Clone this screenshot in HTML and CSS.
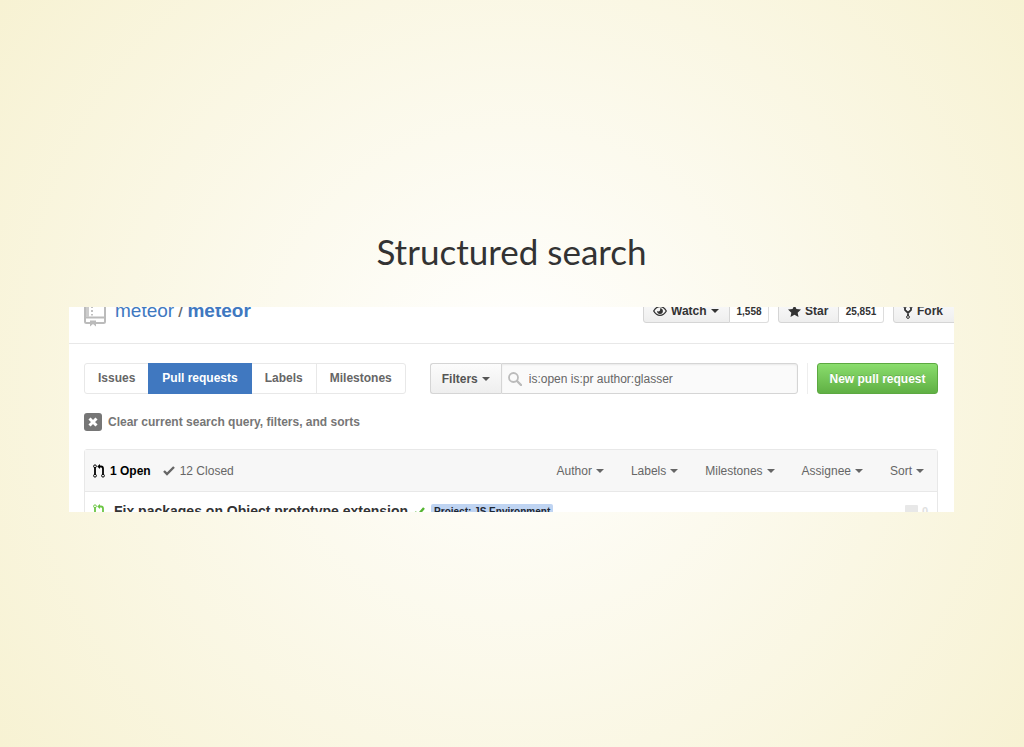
FILE: index.html
```html
<!DOCTYPE html>
<html lang="en">
<head>
    <meta charset="UTF-8">
    <meta name="viewport" content="width=device-width, initial-scale=1.0">
    <title>Structured search</title>
    <link rel="stylesheet" href="styles.css">
</head>
<body>
    <section class="slide">
        <h2>Structured search</h2>
        <div class="shot">
            <header class="repo-head">
                <svg class="repo-icon" width="22" height="30" viewBox="0 0 22 30" fill="none" stroke="#bbb" stroke-width="2">
                    <path d="M6 26H2.500Q1 26 1 24.500V2.500Q1 1 2.500 1H19.500Q21 1 21 2.500V24.500Q21 26 19.500 26H12M1 20.500H21"/>
                    <path d="M3.500 1V20" stroke="#ccc" stroke-width="3"/>
                    <path d="M8 5v2M8 9v2M8 13v2M8 17v1.500" stroke-width="1.800"/>
                    <path d="M6 23.500h6v6l-3-2.500-3 2.500z" fill="#bbb" stroke="none"/>
                </svg>
                <h1 class="repo-name"><a href="#">meteor</a><span>/</span><a href="#" class="strong">meteor</a></h1>
                <div class="social">
                    <div class="social-item">
                        <button class="btn-small btn-watch">
                            <svg width="14" height="12" viewBox="0 0 14 12">
                                <path d="M.7 6Q3.200 1.600 7 1.600T13.300 6Q10.800 10.400 7 10.400T.7 6z" fill="none" stroke="#333" stroke-width="1.300"/>
                                <path d="M7 3.200a2.900 2.900 0 1 1-2.900 2.900q1.500.8 2.500 0T7 3.200z" fill="#333"/>
                            </svg>
                            Watch<span class="caret"></span>
                        </button>
                        <a href="#" class="count count-watch">1,558</a>
                    </div>
                    <div class="social-item">
                        <button class="btn-small btn-star">
                            <svg width="13" height="14" viewBox="0 0 14 15"><path d="M14 6l-4.900-.64L7 1 4.900 5.360 0 6l3.600 3.260L2.670 14 7 11.670 11.330 14l-.93-4.740z" fill="#333"/></svg>
                            Star
                        </button>
                        <a href="#" class="count count-star">25,851</a>
                    </div>
                    <div class="social-item">
                        <button class="btn-small btn-fork">
                            <svg width="10" height="15" viewBox="0 0 10 15" fill="none" stroke="#333">
                                <path d="M2 4v2l3 3 3-3V4M5 8.500V12" stroke-width="1.800"/>
                                <circle cx="2" cy="2.500" r="1.400"/><circle cx="8" cy="2.500" r="1.400"/><circle cx="5" cy="13" r="1.400"/>
                            </svg>
                            Fork
                        </button>
                    </div>
                </div>
            </header>

            <div class="content">
                <div class="toolbar">
                    <nav class="subnav">
                        <a href="#">Issues</a>
                        <a href="#" class="selected">Pull requests</a>
                        <a href="#">Labels</a>
                        <a href="#">Milestones</a>
                    </nav>
                    <div class="search">
                        <button class="btn-filters">Filters<span class="caret"></span></button>
                        <label class="search-box">
                            <svg width="14" height="14" viewBox="0 0 14 14" fill="none" stroke="#bbb">
                                <circle cx="5.500" cy="5.500" r="4.500" stroke-width="1.800"/>
                                <path d="M9 9l4 4" stroke-width="2.400" stroke-linecap="round"/>
                            </svg>
                            <input type="text" value="is:open is:pr author:glasser" aria-label="Search pull requests">
                        </label>
                    </div>
                    <div class="new-pr">
                        <button class="btn-primary">New pull request</button>
                    </div>
                </div>

                <a href="#" class="clear">
                    <svg width="18" height="18" viewBox="0 0 18 18">
                        <rect width="18" height="18" rx="3" fill="#767676"/>
                        <path d="M5.500 5.500l7 7M12.500 5.500l-7 7" stroke="#fff" stroke-width="3"/>
                    </svg>
                    Clear current search query, filters, and sorts
                </a>

                <div class="listing">
                    <div class="listing-head">
                        <a href="#" class="state open">
                            <svg class="pr-icon" width="12" height="14" viewBox="0 0 12 14" fill="none" stroke="currentColor">
                                <path d="M2 4v6M10 10V4.500Q10 2.500 8 2.500H6.500" stroke-width="1.800"/>
                                <path d="M7 0v5L4.200 2.500z" fill="currentColor" stroke="none"/>
                                <circle cx="2" cy="2.300" r="1.400"/><circle cx="2" cy="11.700" r="1.400"/><circle cx="10" cy="11.700" r="1.400"/>
                            </svg>
                            1 Open
                        </a>
                        <a href="#" class="state closed">
                            <svg width="12" height="10" viewBox="0 0 12 10"><path d="M1 5l3 3 7-7" fill="none" stroke="#666" stroke-width="2.400"/></svg>
                            12 Closed
                        </a>
                        <div class="menus">
                            <button>Author<span class="caret"></span></button>
                            <button>Labels<span class="caret"></span></button>
                            <button>Milestones<span class="caret"></span></button>
                            <button>Assignee<span class="caret"></span></button>
                            <button>Sort<span class="caret"></span></button>
                        </div>
                    </div>
                    <div class="pull">
                        <svg class="pr-icon" width="12" height="14" viewBox="0 0 12 14" fill="none" stroke="currentColor">
                            <path d="M2 4v6M10 10V4.500Q10 2.500 8 2.500H6.500" stroke-width="1.800"/>
                            <path d="M7 0v5L4.200 2.500z" fill="currentColor" stroke="none"/>
                            <circle cx="2" cy="2.300" r="1.400"/><circle cx="2" cy="11.700" r="1.400"/><circle cx="10" cy="11.700" r="1.400"/>
                        </svg>
                        <a href="#" class="pull-title">Fix packages on Object prototype extension</a>
                        <svg class="status" width="12" height="12" viewBox="0 0 12 12"><path d="M1 7l3 3 6-7" fill="none" stroke="#55b532" stroke-width="2.400"/></svg>
                        <a href="#" class="label">Project: JS Environment</a>
                        <a href="#" class="comments">
                            <svg width="13" height="13" viewBox="0 0 13 13"><path d="M1 0h11q1 0 1 1v7q0 1-1 1H7l-4 4V9H1q-1 0-1-1V1q0-1 1-1z" fill="#e8e8e8"/></svg>
                            0
                        </a>
                    </div>
                </div>
            </div>
        </div>
    </section>
</body>
</html>
```
FILE: styles.css
```css
* {
    box-sizing: border-box;
}
body {
    margin: 0;
    min-height: 100vh;
    font-family: "Liberation Sans", Arial, sans-serif;
    font-size: 12px;
    color: #333;
    background: #f7f2d3 radial-gradient(circle at center, #ffffff 0%, #f7f2d3 100%);
}
a {
    color: inherit;
    text-decoration: none;
}
button {
    font: inherit;
    color: inherit;
    cursor: pointer;
}
svg {
    flex: none;
}
.slide {
    display: flex;
    flex-direction: column;
    justify-content: center;
    min-height: 100vh;
    padding: 0 70px 6px 69px;
}
h2 {
    margin: 0 0 34px;
    font-family: Lato, sans-serif;
    font-size: 35px;
    font-weight: normal;
    line-height: 44px;
    text-align: center;
    color: #333;
}

/* only the middle part of the page shows */
.shot {
    display: flex;
    flex-direction: column;
    justify-content: flex-end;
    height: 205px;
    overflow: hidden;
    background: #fff;
}
.content {
    height: 168px;
    padding: 19px 16px 0 15px;
}

.repo-head {
    display: flex;
    align-items: flex-start;
    height: 47px;
    flex: none;
    padding-left: 15px;
    border-bottom: 1px solid #e8e8e8;
}
.repo-name {
    display: flex;
    gap: 4px;
    margin: 3px 0 0 9px;
    font-size: 19px;
    font-weight: normal;
    line-height: 22px;
    color: #666;
}
.repo-name a {
    color: #4078c0;
}
.repo-name .strong {
    font-weight: bold;
}
.social {
    display: flex;
    gap: 9px;
    width: 311px;
    margin-left: auto;
    white-space: nowrap;
}
.social-item {
    display: flex;
    flex: none;
    height: 26px;
}
.btn-small {
    display: flex;
    align-items: center;
    gap: 4px;
    padding: 2px 9px 0;
    font-weight: bold;
    border: 1px solid #d5d5d5;
    border-radius: 3px 0 0 3px;
    background: linear-gradient(#fcfcfc, #eee);
}
.btn-watch {
    width: 87px;
}
.btn-star {
    width: 61px;
}
.btn-fork {
    width: 64px;
}
.count {
    display: flex;
    align-items: center;
    justify-content: center;
    padding-top: 2px;
    font-size: 10px;
    font-weight: bold;
    border: 1px solid #ddd;
    border-left: 0;
    border-radius: 0 3px 3px 0;
    background: #fff;
}
.count-watch {
    width: 39px;
}
.count-star {
    width: 45px;
}
.caret {
    display: inline-block;
    margin-left: 4px;
    border: 4px solid transparent;
    border-top-color: currentColor;
    border-bottom: 0;
    vertical-align: middle;
}
.btn-small .caret {
    margin-left: 0;
}

.toolbar {
    display: flex;
    height: 31px;
}
.subnav {
    display: flex;
    color: #666;
    font-weight: bold;
    border: 1px solid #e8e8e8;
    border-radius: 3px;
}
.subnav a {
    padding: 0 13px;
    line-height: 29px;
    border-right: 1px solid #e8e8e8;
}
.subnav a:first-child,
.subnav a:last-child {
    border-right: 0;
}
.subnav .selected {
    margin: -1px 0;
    padding: 0 14px;
    line-height: 31px;
    color: #fff;
    background: #4078c0;
    border-right: 0;
}
.search {
    display: flex;
    flex: 1;
    margin: 0 9px 0 24px;
}
.btn-filters {
    width: 71px;
    padding: 0;
    font-weight: bold;
    color: #555;
    border: 1px solid #d5d5d5;
    border-right: 0;
    border-radius: 3px 0 0 3px;
    background: linear-gradient(#fcfcfc, #eee);
}
.search-box {
    display: flex;
    flex: 1;
    align-items: center;
    gap: 7px;
    padding: 0 6px;
    border: 1px solid #d5d5d5;
    border-radius: 0 3px 3px 0;
    background: #fafafa;
    box-shadow: inset 0 1px 2px rgba(0, 0, 0, 0.07);
}
.search-box input {
    flex: 1;
    min-width: 0;
    padding: 0;
    font: inherit;
    color: #666;
    border: 0;
    outline: 0;
    background: none;
}
.new-pr {
    display: flex;
    padding-left: 9px;
    border-left: 1px solid #eee;
}
.btn-primary {
    width: 121px;
    padding: 0;
    font-weight: bold;
    color: #fff;
    text-shadow: 0 -1px 0 rgba(0, 0, 0, 0.15);
    border: 1px solid #5ca941;
    border-radius: 3px;
    background: linear-gradient(#8add6d, #60b044);
}

.clear {
    display: flex;
    align-items: center;
    gap: 6px;
    margin: 19px 0 18px;
    font-weight: bold;
    color: #767676;
}

.listing {
    border: 1px solid #e8e8e8;
    border-radius: 3px 3px 0 0;
}
.listing-head {
    display: flex;
    align-items: center;
    height: 42px;
    padding: 0 13px 0 8px;
    color: #666;
    background: #f7f7f7;
    border-bottom: 1px solid #e8e8e8;
}
.state {
    display: flex;
    align-items: center;
    gap: 5px;
    margin-right: 12px;
}
.open {
    font-weight: bold;
    color: #000;
}
.menus {
    display: flex;
    gap: 27px;
    margin-left: auto;
}
.menus button {
    padding: 0;
    border: 0;
    background: none;
}
.pull {
    display: flex;
    align-items: center;
    height: 38px;
    padding: 0 9px 0 8px;
    white-space: nowrap;
}
.pull .pr-icon {
    color: #6cc644;
}
.pull-title {
    margin-left: 9px;
    font-size: 14px;
    font-weight: bold;
}
.status {
    margin: 0 5px 0 6px;
}
.label {
    padding: 0 3px;
    font-size: 10px;
    font-weight: bold;
    line-height: 15px;
    color: #1c2733;
    border-radius: 2px;
    background: #bfd4f2;
}
.comments {
    display: flex;
    align-items: center;
    gap: 4px;
    margin-left: auto;
    color: #e0e0e0;
    font-weight: bold;
    font-size: 11px;
}
```
